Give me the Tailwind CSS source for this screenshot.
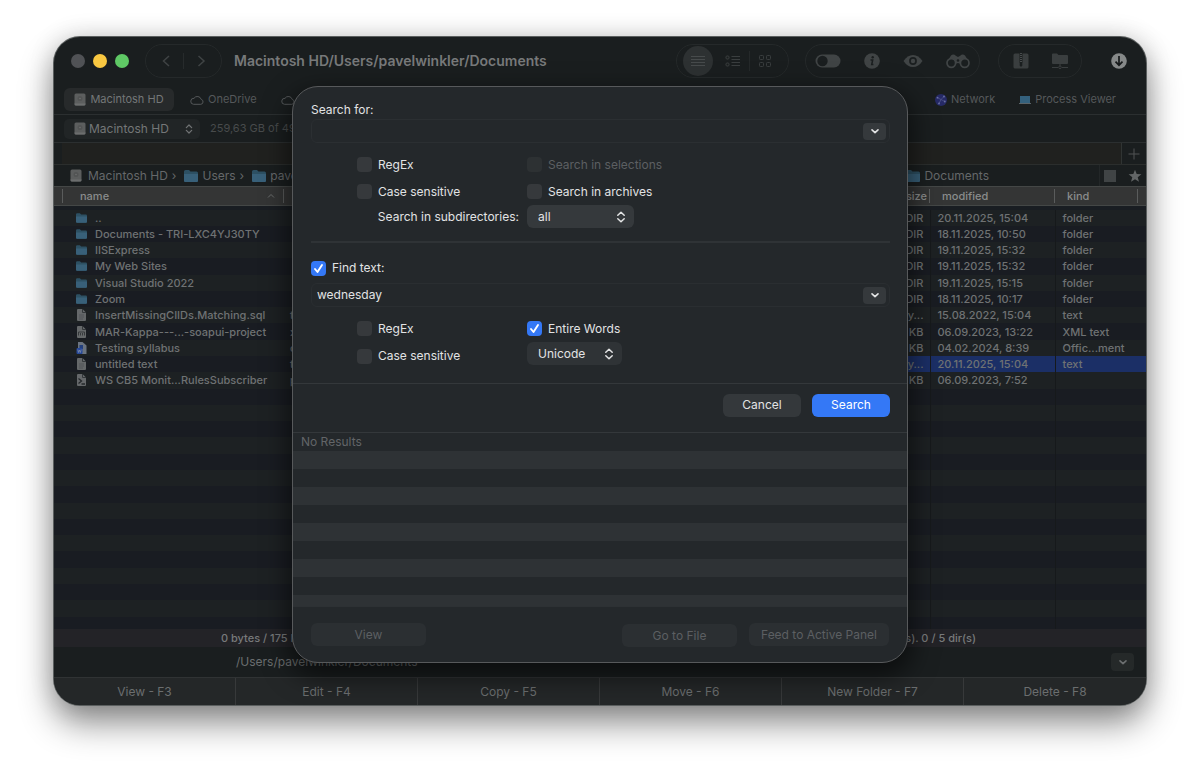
<!DOCTYPE html>
<html lang="en">
<head>
    <meta charset="UTF-8">
    <meta name="viewport" content="width=device-width, initial-scale=1.0">
    <title>Documents - Search</title>
    <script src="https://cdn.jsdelivr.net/npm/@tailwindcss/browser@4"></script>
</head>
<body class="flow-root min-h-screen bg-white font-['Inter','Liberation_Sans',sans-serif] text-xs text-[#6f7273]">
    <!-- shared icons -->
    <svg class="hidden">
        <symbol id="folder" viewBox="0 0 14 12">
            <path d="M0 1.5Q0 0 1.5 0H5l1.5 1.5h6Q14 1.5 14 3v7.500Q14 12 12.500 12h-11Q0 12 0 10.500z" fill="#2d5063"/>
            <path d="M0 4h14v6.500Q14 12 12.500 12h-11Q0 12 0 10.500z" fill="#386079"/>
        </symbol>
        <symbol id="disk" viewBox="0 0 12 13">
            <rect x="0.500" y="0.500" width="11" height="12" rx="1.500" fill="#5c5e5e"/>
            <path d="M0.500 10.500h11v.500q0 1.500-1.500 1.500H2q-1.500 0-1.500-1.500z" fill="#6c6e6e"/>
            <circle cx="6" cy="5.500" r="2.500" fill="#525454"/>
            <circle cx="6" cy="5.500" r="0.800" fill="#6e7070"/>
        </symbol>
        <symbol id="cloud" viewBox="0 0 14 10">
            <path d="M3.500 9.300h7.300a2.500 2.500 0 0 0 .4-4.900A4 4 0 0 0 4 3.300 3 3 0 0 0 3.500 9.300z" fill="none" stroke="#55585a"/>
        </symbol>
        <symbol id="file" viewBox="0 0 10 12">
            <path d="M0.500 1Q0.500 0 1.500 0H6l3.500 3.500V11q0 1-1 1h-7q-1 0-1-1z" fill="#65686a"/>
            <path d="M6 0v3.500h3.500" fill="none" stroke="#34383b"/>
            <path d="M2.500 6h5M2.500 8h5M2.500 10h4" stroke="#4c4f51" stroke-width="0.700"/>
        </symbol>
        <symbol id="xml" viewBox="0 0 10 12">
            <path d="M0.500 1Q0.500 0 1.500 0H6l3.500 3.500V11q0 1-1 1h-7q-1 0-1-1z" fill="#65686a"/>
            <path d="M6 0v3.500h3.500" fill="none" stroke="#34383b"/>
            <path d="M2 9.500V6h6v3.500M4 9.500V7M6 9.500V7" fill="none" stroke="#36393c"/>
        </symbol>
        <symbol id="script" viewBox="0 0 10 12">
            <path d="M0.500 1Q0.500 0 1.500 0H6l3.500 3.500V11q0 1-1 1h-7q-1 0-1-1z" fill="#65686a"/>
            <path d="M6 0v3.500h3.500" fill="none" stroke="#34383b"/>
            <path d="M2 4.500L5 7 2 9.500M5 10h3.500" fill="none" stroke="#25282b" stroke-width="1.300"/>
        </symbol>
        <symbol id="word" viewBox="0 0 10 12">
            <path d="M1.500 0H6l4 3.500V12H1.500z" fill="#6b7480"/>
            <path d="M3 3h3.500v4H3z" fill="#23407c"/>
            <rect y="6" width="6" height="6" rx="1" fill="#27499a"/>
            <path d="M1.300 7.500l.8 3 .9-2.500.9 2.500.8-3" fill="none" stroke="#8592ad" stroke-width="0.700"/>
        </symbol>
        <symbol id="updown" viewBox="0 0 10 12">
            <path d="M1.800 4.300L5 1.200l3.200 3.100M1.800 7.700L5 10.800l3.200-3.100" fill="none" stroke="currentColor" stroke-width="1.500" stroke-linecap="round" stroke-linejoin="round"/>
        </symbol>
        <symbol id="down" viewBox="0 0 10 10">
            <path d="M2 3.800l3 2.900 3-2.900" fill="none" stroke="currentColor" stroke-width="1.600" stroke-linecap="round" stroke-linejoin="round"/>
        </symbol>
    </svg>

    <div class="relative mx-[54px] my-[37px]">
        <main class="flex flex-col overflow-hidden rounded-[26px] bg-[#1a1e1f] shadow-[0_0_0_1px_#5b5f5f,0_18px_34px_rgba(0,0,0,0.45),0_0_26px_rgba(0,0,0,0.16)]">

            <!-- toolbar -->
            <header class="flex h-12 items-center pr-[19px] pl-[17px]">
                <div class="flex gap-2">
                    <button aria-label="Close" class="size-3.5 rounded-full bg-[#505255]"></button>
                    <button aria-label="Minimize" class="size-3.5 rounded-full bg-[#f9c841]"></button>
                    <button aria-label="Zoom" class="size-3.5 rounded-full bg-[#5fc965]"></button>
                </div>
                <div class="ml-4 flex h-[34px] w-[77px] items-center justify-between rounded-full border border-[#25292a] px-3">
                    <button aria-label="Back"><svg class="h-4 w-4" viewBox="0 0 16 16"><path d="M11 3L5.500 8l5.500 5" fill="none" stroke="#3f4344" stroke-width="1.500"/></svg></button>
                    <span class="h-4 w-px bg-[#272b2c]"></span>
                    <button aria-label="Forward"><svg class="h-4 w-4" viewBox="0 0 16 16"><path d="M5.500 3L11 8l-5.500 5" fill="none" stroke="#3f4344" stroke-width="1.500"/></svg></button>
                </div>
                <h1 class="ml-3 text-sm font-semibold text-[#77797a]">Macintosh HD/Users/pavelwinkler/Documents</h1>

                <div class="ml-auto flex h-[34px] w-[113px] items-center rounded-full border border-[#25292a] px-1.5">
                    <button aria-label="List" class="flex size-[30px] items-center justify-center rounded-full bg-[#2d3132]">
                        <svg class="h-4 w-4" viewBox="0 0 16 16"><path d="M1 3.500h14M1 6.500h14M1 9.500h14M1 12.500h14" stroke="#474b4c"/></svg>
                    </button>
                    <button aria-label="Details" class="ml-3">
                        <svg class="h-3.5 w-4" viewBox="0 0 16 14" fill="none" stroke="#3a3e3f"><rect x="1" y="2" width="3" height="3" rx="1"/><rect x="1" y="9" width="3" height="3" rx="1"/><path d="M6.500 2.500H15M6.500 5.500H15M6.500 8.500H15M6.500 11.500H15"/></svg>
                    </button>
                    <span class="mx-2 h-5 w-px bg-[#25292a]"></span>
                    <button aria-label="Icons">
                        <svg class="h-3.5 w-3.5" viewBox="0 0 14 14" fill="none" stroke="#3a3e3f"><rect x="1.500" y="1.500" width="4" height="4" rx="0.800"/><rect x="8.500" y="1.500" width="4" height="4" rx="0.800"/><rect x="1.500" y="8.500" width="4" height="4" rx="0.800"/><rect x="8.500" y="8.500" width="4" height="4" rx="0.800"/></svg>
                    </button>
                </div>
                <div class="ml-4 flex h-[34px] w-[175px] items-center justify-between rounded-full border border-[#25292a] px-[9px]">
                    <button aria-label="Toggle hidden files">
                        <svg class="h-3.5 w-[26px]" viewBox="0 0 26 14"><rect x="0.500" y="0.500" width="25" height="13" rx="6.500" fill="#404445"/><circle cx="7.500" cy="7" r="5.200" fill="#1a1e1f"/></svg>
                    </button>
                    <button aria-label="Info">
                        <svg class="h-4 w-4" viewBox="0 0 16 16"><circle cx="8" cy="8" r="7.800" fill="#404445"/><circle cx="8.700" cy="4.300" r="1.200" fill="#1a1e1f"/><path d="M6.500 7h2.200l-1 4.500h1.700" fill="none" stroke="#1a1e1f" stroke-width="1.500"/></svg>
                    </button>
                    <button aria-label="Preview">
                        <svg class="h-3.5 w-5" viewBox="0 0 20 14"><path d="M0.500 7Q4.500 1 10 1t9.500 6q-4 6-9.500 6T0.500 7z" fill="#404445"/><circle cx="10" cy="7" r="3.900" fill="#1a1e1f"/><circle cx="10" cy="7" r="2.200" fill="#404445"/></svg>
                    </button>
                    <button aria-label="Find">
                        <svg class="h-4 w-6" viewBox="0 0 24 16"><path d="M1 9L5 2.500Q7.500.5 9.800 2.800L12 4l2.200-1.200Q16.500.5 19 2.500L23 9l-8 2-3-1-3 1z" fill="#404445"/><circle cx="5.300" cy="10" r="4.300" fill="#1a1e1f" stroke="#404445" stroke-width="1.700"/><circle cx="18.700" cy="10" r="4.300" fill="#1a1e1f" stroke="#404445" stroke-width="1.700"/><circle cx="12" cy="7.500" r="1.300" fill="#1a1e1f"/></svg>
                    </button>
                </div>
                <div class="ml-[18px] flex h-[34px] w-[84px] items-center justify-between rounded-full border border-[#25292a] pr-3 pl-3.5">
                    <button aria-label="Archive">
                        <svg class="h-4 w-4" viewBox="0 0 16 16"><rect x="0.500" y="0.500" width="15" height="15" rx="1.500" fill="#3a3e3f"/><path d="M8 0v10" stroke="#1a1e1f" stroke-width="3"/><path d="M8 0v10" stroke="#484c4d" stroke-width="2" stroke-dasharray="1 1"/><rect x="6.700" y="9.500" width="2.600" height="4" rx="1" fill="#1a1e1f"/></svg>
                    </button>
                    <button aria-label="Connect to server">
                        <svg class="h-4 w-[18px]" viewBox="0 0 18 16"><path d="M1 1.500Q1 .5 2 .5h4l1.500 1.500H16q1 0 1 1V10q0 1-1 1H2q-1 0-1-1z" fill="#3a3e3f"/><path d="M1 14.500h6M11 14.500h6M9 11v2" stroke="#3a3e3f"/><circle cx="9" cy="14.300" r="1.300" fill="none" stroke="#3a3e3f"/></svg>
                    </button>
                </div>
                <button aria-label="Downloads" class="ml-[29px]">
                    <svg class="h-4 w-4" viewBox="0 0 16 16"><circle cx="8" cy="8" r="7.800" fill="#868989"/><path d="M8 3v9M4.500 8.700L8 12.200l3.500-3.500" fill="none" stroke="#16191a" stroke-width="1.700"/></svg>
                </button>
            </header>

            <!-- favourites -->
            <nav class="flex h-[30px] items-center border-b border-[#2b2f30] px-2.5 text-[11px] text-[#55585a]">
                <a href="#" class="flex h-[23px] w-[110px] items-center justify-center gap-1 rounded-md bg-[#272a2b] text-[#747778]"><svg class="h-[13px] w-3"><use href="#disk"/></svg>Macintosh HD</a>
                <a href="#" class="ml-4 flex items-center gap-1"><svg class="h-2.5 w-3.5"><use href="#cloud"/></svg>OneDrive</a>
                <a href="#" aria-label="Cloud" class="ml-6"><svg class="h-2.5 w-3.5"><use href="#cloud"/></svg></a>
                <a href="#" class="ml-auto flex items-center gap-1">
                    <svg class="h-3 w-3" viewBox="0 0 12 12"><circle cx="6" cy="6" r="6" fill="#262a66"/><path d="M2.500 3.700L6 5.500l3-3M6 5.500l-2 4M6 5.500l3.800 2" stroke="#5a6096" stroke-width="0.600" fill="none"/><circle cx="2.500" cy="3.700" r="0.900" fill="#6a70a4"/><circle cx="9" cy="2.500" r="0.900" fill="#6a70a4"/><circle cx="4" cy="9.500" r="0.900" fill="#6a70a4"/><circle cx="9.800" cy="7.500" r="0.900" fill="#6a70a4"/></svg>Network</a>
                <a href="#" class="mr-5 ml-6 flex items-center gap-1">
                    <svg class="h-2.5 w-3" viewBox="0 0 12 10"><rect x="1" y="1" width="10" height="7" fill="#34617d"/><path d="M0 8.500h12" stroke="#5b6468"/></svg>Process Viewer</a>
            </nav>

            <!-- volume -->
            <div class="flex h-7 items-center border-b border-[#2b2f30] px-2.5">
                <div class="relative flex h-5 w-[136px] items-center">
                    <select aria-label="Volume" class="h-full w-full appearance-none rounded-[5px] bg-[#212526] pl-[25px] text-[#747778]"><option>Macintosh HD</option></select>
                    <svg class="pointer-events-none absolute left-2.5 h-[13px] w-3"><use href="#disk"/></svg>
                    <svg class="pointer-events-none absolute right-1.5 h-2.5 w-2.5"><use href="#updown"/></svg>
                </div>
                <span class="ml-2.5 text-[11px] text-[#484b4c]">259,63 GB of 494 GB</span>
            </div>

            <!-- panel tabs -->
            <div class="flex h-[22px] border-b border-[#2b2e2d] pl-2">
                <div class="flex-1 border-r border-[#303433] bg-[#20211f]"></div>
                <button aria-label="New tab" class="flex w-6 items-center justify-center"><svg class="h-3 w-3" viewBox="0 0 12 12"><path d="M6 .5v11M.5 6h11" stroke="#505354"/></svg></button>
            </div>

            <!-- the two file panels -->
            <div class="flex h-[464px] overflow-hidden">
                <section class="flex-1">
                    <div class="flex h-[21px] items-center pl-4 text-[#65686a]">
                        <svg class="h-[13px] w-3"><use href="#disk"/></svg><span class="ml-1.5">Macintosh HD</span>
                        <span class="mx-1">›</span><svg class="ml-1 h-3 w-3.5"><use href="#folder"/></svg><span class="ml-1">Users</span>
                        <span class="mx-1">›</span><svg class="ml-1 h-3 w-3.5"><use href="#folder"/></svg><span class="ml-1">pavel</span>
                    </div>
                    <table class="h-[447px] w-full table-fixed border-collapse text-left">
                        <thead>
                            <tr class="h-[19px] border-y border-[#444746] bg-[#343535] text-[11px] text-[#8a8c8c]">
                                <th class="w-[230px] p-0 font-medium">
                                    <div class="ml-2 flex h-3.5 items-center justify-between border-x border-[#5a5c5c] pr-2 pl-[17px]">name
                                        <svg class="h-2 w-2" viewBox="0 0 8 8"><path d="M1 5.500l3-3 3 3" fill="none" stroke="#6a6d6d"/></svg>
                                    </div>
                                </th>
                                <th class="p-0"></th>
                            </tr>
                        </thead>
                        <tbody id="left"></tbody>
                    </table>
                </section>
                <section class="flex-1">
                    <div class="flex h-[21px] items-center text-[#65686a]">
                        <svg class="ml-auto h-3 w-3.5"><use href="#folder"/></svg><span class="ml-1">Documents</span>
                        <div class="ml-[110px] flex h-full items-center gap-3 border-l border-[#232728] pr-1 pl-1">
                            <button aria-label="Stop" class="size-3 bg-[#404445]"></button>
                            <button aria-label="Favorite"><svg class="h-3.5 w-3.5" viewBox="0 0 14 14"><path d="M7 .7l1.700 4.400 4.700.2-3.700 2.900 1.300 4.600L7 10.200l-4 2.600 1.300-4.600L.6 5.300l4.700-.2z" fill="#626566"/></svg></button>
                        </div>
                    </div>
                    <table class="h-[447px] w-full table-fixed border-collapse text-left">
                        <thead>
                            <tr class="h-[19px] border-y border-[#444746] bg-[#343535] text-[11px] text-[#8a8c8c]">
                                <th class="p-0 text-right font-medium"><div class="border-r border-[#5a5c5c] pr-0.5 leading-3.5">size</div></th>
                                <th class="w-[125px] p-0 font-medium"><div class="border-r border-[#5a5c5c] pl-3 leading-3.5">modified</div></th>
                                <th class="w-[91px] p-0 font-medium"><div class="mr-2 border-r border-[#5a5c5c] pl-3 leading-3.5">kind</div></th>
                            </tr>
                        </thead>
                        <tbody id="right"></tbody>
                    </table>
                </section>
            </div>

            <!-- status and command line -->
            <div class="flex h-[18px] items-center bg-[#232327] text-[11px] font-medium text-[#787a7b]">
                <span class="flex-1 pl-[167px]">0 bytes / 175 KB</span>
                <span class="flex-1 pr-[170px] text-right">file(s). 0 / 5 dir(s)</span>
            </div>
            <div class="flex h-[30px] items-center pr-3 pl-[182px] text-[#6b6e6f]">
                <label for="command">/Users/pavelwinkler/Documents</label>
                <input id="command" type="text" class="min-w-0 flex-1 outline-none">
                <button aria-label="History" class="flex h-[18px] w-[23px] items-center justify-center rounded bg-[#252929]"><svg class="h-2.5 w-2.5"><use href="#down"/></svg></button>
            </div>
            <footer class="grid h-7 grid-cols-6 divide-x divide-[#37393a] border-t border-[#303334] bg-[#242728] text-[#6b6e6f]">
                <button>View - F3</button>
                <button>Edit - F4</button>
                <button>Copy - F5</button>
                <button>Move - F6</button>
                <button>New Folder - F7</button>
                <button>Delete - F8</button>
            </footer>
        </main>

        <!-- search sheet -->
        <form class="absolute top-[49px] left-1/2 flex w-[616px] -translate-x-1/2 flex-col overflow-hidden rounded-[26px] border border-[#57595b] bg-[#24282b] text-[#e2e3e4] shadow-[0_10px_26px_4px_rgba(0,0,0,0.55)]">
            <div class="pt-3 pr-[17px] pl-[18px]">
                <label for="pattern" class="block h-5 leading-[22px]">Search for:</label>
                <div class="flex h-6 items-center rounded-md border border-[#2b2f32] pr-[3px]">
                    <input id="pattern" type="text" class="min-w-0 flex-1 px-1.5 outline-none">
                    <button type="button" aria-label="Recent patterns" class="flex h-[17px] w-[23px] items-center justify-center rounded bg-[#35393c]"><svg class="h-2.5 w-2.5"><use href="#down"/></svg></button>
                </div>
                <div class="mt-2 grid grid-cols-[170px_1fr] pl-[46px]">
                    <label class="flex h-[27px] items-center gap-1.5"><input type="checkbox" class="size-[15px] appearance-none rounded bg-[#36393c]">RegEx</label>
                    <label class="flex h-[27px] items-center gap-1.5 text-[#5c5f62]"><input type="checkbox" disabled class="size-[15px] appearance-none rounded bg-[#2d3133]">Search in selections</label>
                    <label class="flex h-[27px] items-center gap-1.5"><input type="checkbox" class="size-[15px] appearance-none rounded bg-[#36393c]">Case sensitive</label>
                    <label class="flex h-[27px] items-center gap-1.5"><input type="checkbox" class="size-[15px] appearance-none rounded bg-[#36393c]">Search in archives</label>
                    <label for="depth" class="pr-2 text-right leading-6">Search in subdirectories:</label>
                    <div class="relative flex h-[23px] w-[107px] items-center">
                        <select id="depth" class="h-full w-full appearance-none rounded-md bg-[#35393c] pl-[11px]"><option>all</option></select>
                        <svg class="pointer-events-none absolute right-2 h-3 w-2.5"><use href="#updown"/></svg>
                    </div>
                </div>
                <hr class="mt-3 border-t-2 border-[#2f3336]">
                <label class="mt-[17px] flex h-4 items-center gap-1.5">
                    <span class="relative flex size-[15px]">
                        <input type="checkbox" checked class="size-[15px] appearance-none rounded bg-[#3478f6]">
                        <svg class="pointer-events-none absolute inset-0" viewBox="0 0 15 15"><path d="M4 8l2.500 3L11 4" fill="none" stroke="#fff" stroke-width="1.900" stroke-linecap="round" stroke-linejoin="round"/></svg>
                    </span>Find text:
                </label>
                <div class="mt-[7px] flex h-6 items-center rounded-md border border-[#2a2e31] pr-[3px]">
                    <input type="text" aria-label="Find text" value="wednesday" class="min-w-0 flex-1 px-[5px] outline-none">
                    <button type="button" aria-label="Recent texts" class="flex h-[17px] w-[23px] items-center justify-center rounded bg-[#35393c]"><svg class="h-2.5 w-2.5"><use href="#down"/></svg></button>
                </div>
                <div class="mt-2 grid grid-cols-[170px_1fr] items-start pl-[46px]">
                    <label class="flex h-[27px] items-center gap-1.5"><input type="checkbox" class="size-[15px] appearance-none rounded bg-[#36393c]">RegEx</label>
                    <label class="flex h-[27px] items-center gap-1.5">
                        <span class="relative flex size-[15px]">
                            <input type="checkbox" checked class="size-[15px] appearance-none rounded bg-[#3478f6]">
                            <svg class="pointer-events-none absolute inset-0" viewBox="0 0 15 15"><path d="M4 8l2.500 3L11 4" fill="none" stroke="#fff" stroke-width="1.900" stroke-linecap="round" stroke-linejoin="round"/></svg>
                        </span>Entire Words
                    </label>
                    <label class="flex h-7 items-center gap-1.5"><input type="checkbox" class="size-[15px] appearance-none rounded bg-[#36393c]">Case sensitive</label>
                    <div class="relative flex h-[23px] w-[95px] items-center">
                        <select aria-label="Encoding" class="h-full w-full appearance-none rounded-md bg-[#2f3336] pl-[11px]"><option>Unicode</option></select>
                        <svg class="pointer-events-none absolute right-2 h-3 w-2.5"><use href="#updown"/></svg>
                    </div>
                </div>
            </div>
            <div class="mt-[13px] flex h-[50px] items-center justify-end gap-[11px] border-y border-[#34383b] pr-[17px] pb-1.5">
                <button type="button" class="h-[23px] w-[78px] rounded-md bg-[#34383b]">Cancel</button>
                <button type="submit" class="h-[23px] w-[78px] rounded-md bg-[#3478f6] text-white">Search</button>
            </div>
            <ul id="results" class="h-[174px] overflow-hidden border-b border-[#2d3134] text-[#626568]">
                <li class="h-[18px] px-2 leading-[18px]">No Results</li>
            </ul>
            <div class="flex h-[55px] items-start gap-3 px-[18px] pt-4 text-[#5c5f62]">
                <button type="button" disabled class="h-[23px] w-[115px] rounded-md bg-[#2b2f32]">View</button>
                <button type="button" disabled class="mt-px ml-auto h-[23px] w-[115px] rounded-md bg-[#2b2f32]">Go to File</button>
                <button type="button" disabled class="h-[23px] w-[140px] rounded-md bg-[#2b2f32]">Feed to Active Panel</button>
            </div>
        </form>
    </div>

    <script>
        // icon, name, first letter of the type, size, modified, kind
        const files = [
            ["folder", "..", "", "DIR", "20.11.2025, 15:04", "folder"],
            ["folder", "Documents - TRI-LXC4YJ30TY", "", "DIR", "18.11.2025, 10:50", "folder"],
            ["folder", "IISExpress", "", "DIR", "19.11.2025, 15:32", "folder"],
            ["folder", "My Web Sites", "", "DIR", "19.11.2025, 15:32", "folder"],
            ["folder", "Visual Studio 2022", "", "DIR", "19.11.2025, 15:15", "folder"],
            ["folder", "Zoom", "", "DIR", "18.11.2025, 10:17", "folder"],
            ["file", "InsertMissingCIIDs.Matching.sql", "t", "y...", "15.08.2022, 15:04", "text"],
            ["xml", "MAR-Kappa---...-soapui-project", "x", "KB", "06.09.2023, 13:22", "XML text"],
            ["word", "Testing syllabus", "o", "KB", "04.02.2024, 8:39", "Offic...ment"],
            ["file", "untitled text", "t", "y...", "20.11.2025, 15:04", "text"],
            ["script", "WS CB5 Monit...RulesSubscriber", "p", "KB", "06.09.2023, 7:52", ""]
        ];
        const rowCount = 26;
        const selected = 9;

        let left = '<tr class="bg-[#191d22]"><td colspan="2" class="h-1 p-0"></td></tr>';
        let right = '<tr class="bg-[#191d22]"><td colspan="3" class="h-1 p-0"></td></tr>';
        for (let i = 0; i < rowCount; i++) {
            const stripe = i % 2 ? "bg-[#191c22]" : "bg-[#1d2123]";
            const file = files[i];
            const name = file
                ? `<div class="flex items-center whitespace-nowrap pl-[22px]"><svg class="${file[0] === "folder" ? "h-2.5 w-[11px]" : "h-3 w-[11px]"}"><use href="#${file[0]}"/></svg><span class="ml-2">${file[1]}</span></div>`
                : "&nbsp;";
            left += `<tr class="${stripe} text-[11px] leading-4 font-medium"><td class="p-0">${name}</td><td class="p-0 pl-1.5">${file ? file[2] : ""}</td></tr>`;
            right += `<tr class="${i === selected ? "bg-[#1b2f66]" : stripe} text-[11px] leading-4 font-medium">
                <td class="border-r border-[#16191b] p-0 pr-1.5 text-right">${file ? file[3] : "&nbsp;"}</td>
                <td class="border-r border-[#16191b] p-0 pl-[7px]">${file ? file[4] : ""}</td>
                <td class="p-0 pl-[7px]">${file ? file[5] : ""}</td></tr>`;
        }
        document.getElementById("left").innerHTML = left;
        document.getElementById("right").innerHTML = right;

        // empty striped rows under "No Results"
        const results = document.getElementById("results");
        for (let i = 0; i < 9; i++) {
            results.innerHTML += `<li class="h-[18px] ${i % 2 ? "bg-[#24282b]" : "bg-[#2e3235]"}"></li>`;
        }
    </script>
</body>
</html>
